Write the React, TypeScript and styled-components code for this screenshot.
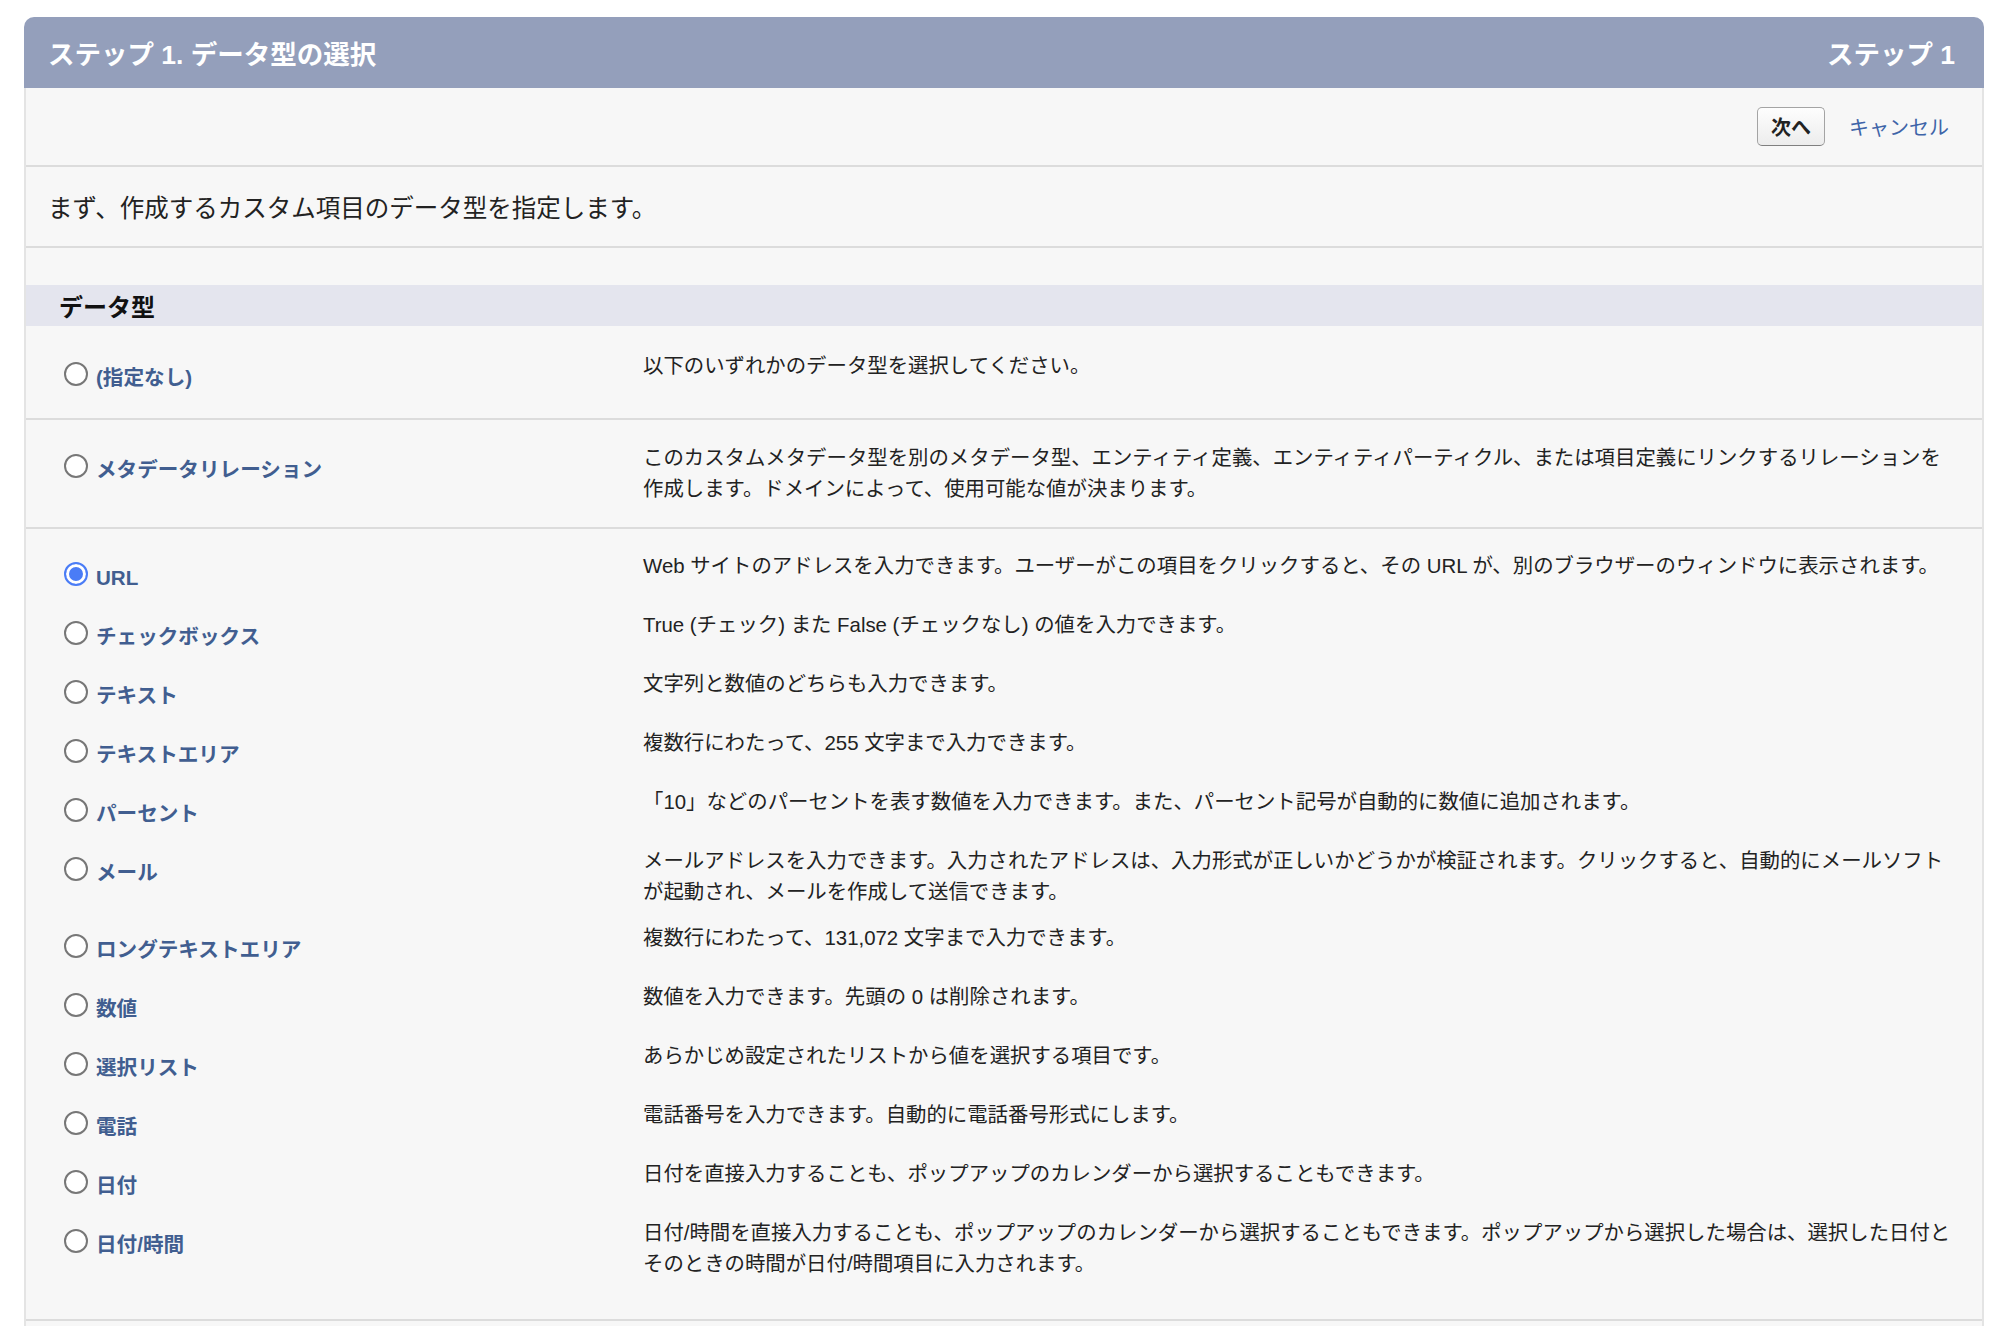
import React, { useState } from "react";
import styled, { createGlobalStyle } from "styled-components";

interface DataType {
  id: string;
  label: string;
  desc: string;
}

const noneType: DataType[] = [
  { id: "none", label: "(指定なし)", desc: "以下のいずれかのデータ型を選択してください。" },
];

const relationType: DataType[] = [
  {
    id: "relation",
    label: "メタデータリレーション",
    desc: "このカスタムメタデータ型を別のメタデータ型、エンティティ定義、エンティティパーティクル、または項目定義にリンクするリレーションを作成します。ドメインによって、使用可能な値が決まります。",
  },
];

const fieldTypes: DataType[] = [
  {
    id: "url",
    label: "URL",
    desc: "Web サイトのアドレスを入力できます。ユーザーがこの項目をクリックすると、その URL が、別のブラウザーのウィンドウに表示されます。",
  },
  { id: "checkbox", label: "チェックボックス", desc: "True (チェック) また False (チェックなし) の値を入力できます。" },
  { id: "text", label: "テキスト", desc: "文字列と数値のどちらも入力できます。" },
  { id: "textarea", label: "テキストエリア", desc: "複数行にわたって、255 文字まで入力できます。" },
  {
    id: "percent",
    label: "パーセント",
    desc: "「10」などのパーセントを表す数値を入力できます。また、パーセント記号が自動的に数値に追加されます。",
  },
  {
    id: "email",
    label: "メール",
    desc: "メールアドレスを入力できます。入力されたアドレスは、入力形式が正しいかどうかが検証されます。クリックすると、自動的にメールソフトが起動され、メールを作成して送信できます。",
  },
  { id: "longtext", label: "ロングテキストエリア", desc: "複数行にわたって、131,072 文字まで入力できます。" },
  { id: "number", label: "数値", desc: "数値を入力できます。先頭の 0 は削除されます。" },
  { id: "picklist", label: "選択リスト", desc: "あらかじめ設定されたリストから値を選択する項目です。" },
  { id: "phone", label: "電話", desc: "電話番号を入力できます。自動的に電話番号形式にします。" },
  { id: "date", label: "日付", desc: "日付を直接入力することも、ポップアップのカレンダーから選択することもできます。" },
  {
    id: "datetime",
    label: "日付/時間",
    desc: "日付/時間を直接入力することも、ポップアップのカレンダーから選択することもできます。ポップアップから選択した場合は、選択した日付とそのときの時間が日付/時間項目に入力されます。",
  },
];

const App: React.FC = () => {
  const [selected, setSelected] = useState("url");

  const renderItems = (items: DataType[]) =>
    items.map((item) => (
      <Item key={item.id}>
        <LabelCell>
          <Radio
            name="dataType"
            value={item.id}
            checked={selected === item.id}
            onChange={() => setSelected(item.id)}
          />
          <LabelText>{item.label}</LabelText>
        </LabelCell>
        <DescCell>{item.desc}</DescCell>
      </Item>
    ));

  return (
    <>
      <GlobalStyle />
      <Card>
        <Header>
          <span>ステップ 1. データ型の選択</span>
          <span>ステップ 1</span>
        </Header>
        <Body>
          <Toolbar>
            <Button type="button">次へ</Button>
            <CancelLink href="#">キャンセル</CancelLink>
          </Toolbar>
          <Intro>まず、作成するカスタム項目のデータ型を指定します。</Intro>
          <SectionTitle>データ型</SectionTitle>
          <Block $padTop={17} $padBottom={16}>
            {renderItems(noneType)}
          </Block>
          <Block $padTop={15} $padBottom={15}>
            {renderItems(relationType)}
          </Block>
          <Block $padTop={14} $padBottom={31}>
            {renderItems(fieldTypes)}
          </Block>
          <Footer />
        </Body>
      </Card>
    </>
  );
};

const GlobalStyle = createGlobalStyle`
  html, body {
    margin: 0;
    padding: 0;
    background: #ffffff;
  }
  body {
    font-family: "Liberation Sans", "Noto Sans CJK JP", sans-serif;
    color: #222222;
  }
`;

const Card = styled.div`
  margin: 17px 24px 40px 24px;
`;

const Header = styled.div`
  height: 71px;
  display: flex;
  align-items: center;
  justify-content: space-between;
  padding: 0 29px 0 24px;
  background-color: #949fbb;
  border-radius: 10px 10px 0 0;
  color: #ffffff;
  font-size: 26.5px;
  font-weight: 700;
`;

const Body = styled.div`
  background-color: #f7f7f7;
  border-left: 2px solid #e4e4e4;
  border-right: 2px solid #e4e4e4;
  border-radius: 0 0 10px 10px;
`;

const Toolbar = styled.div`
  height: 77px;
  display: flex;
  align-items: center;
  justify-content: flex-end;
  gap: 24px;
  padding-right: 33px;
  border-bottom: 2px solid #dcdcdc;
`;

const Button = styled.button`
  width: 68px;
  height: 39px;
  padding: 0;
  border: 1px solid #a4a4a4;
  border-bottom-color: #7f7f7f;
  border-radius: 5px;
  background: linear-gradient(#fefefe, #ececec);
  font-family: inherit;
  font-size: 20px;
  font-weight: 700;
  color: #222222;
  cursor: pointer;
`;

const CancelLink = styled.a`
  font-size: 20px;
  color: #3e64a8;
  text-decoration: none;
`;

const Intro = styled.div`
  height: 79px;
  display: flex;
  align-items: center;
  padding-left: 22px;
  font-size: 24.5px;
  color: #222222;
  border-bottom: 2px solid #dcdcdc;
`;

const SectionTitle = styled.h3`
  margin: 37px 0 0 0;
  height: 41px;
  display: flex;
  align-items: center;
  padding-left: 33px;
  background-color: #e4e5ee;
  font-size: 24px;
  font-weight: 700;
  color: #111111;
`;

const Block = styled.div<{ $padTop: number; $padBottom: number }>`
  padding-top: ${(p) => p.$padTop}px;
  padding-bottom: ${(p) => p.$padBottom}px;
  border-bottom: 2px solid #dcdcdc;
`;

const Item = styled.div`
  display: grid;
  grid-template-columns: 617px 1fr;
  min-height: 59px;
`;

const LabelCell = styled.label`
  display: flex;
  align-items: flex-start;
  gap: 8px;
  padding: 18px 0 0 38px;
  cursor: pointer;
`;

const Radio = styled.input.attrs({ type: "radio" })`
  appearance: none;
  flex: none;
  width: 24px;
  height: 24px;
  margin: 1px 0 0 0;
  border: 2px solid #777777;
  border-radius: 50%;
  background: #ffffff;
  cursor: pointer;

  &:checked {
    border-color: #4a7cf6;
    box-shadow: inset 0 0 0 3px #ffffff, inset 0 0 0 12px #4a7cf6;
  }
`;

const LabelText = styled.span`
  font-size: 20.6px;
  line-height: 30px;
  font-weight: 700;
  color: #415e90;
  padding-top: 2px;
`;

const DescCell = styled.div`
  padding: 8px 27px 8px 0;
  font-size: 20.4px;
  line-height: 30.6px;
  color: #222222;
`;

const Footer = styled.div`
  height: 60px;
`;

export default App;
